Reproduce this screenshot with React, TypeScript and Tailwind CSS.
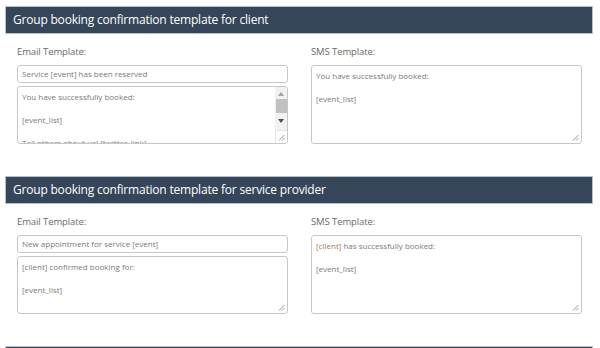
import React from "react";

const font = { fontFamily: '"Open Sans", "Noto Sans", sans-serif' };

function Grip() {
  return (
    <svg className="absolute right-[2px] bottom-[2px]" width="7" height="7" viewBox="0 0 7 7">
      <line x1="6.5" y1="1" x2="1" y2="6.5" stroke="#8a8a8a" strokeWidth="0.9" />
      <line x1="6.5" y1="4" x2="4" y2="6.5" stroke="#8a8a8a" strokeWidth="0.9" />
    </svg>
  );
}

function Box({ lines, h, scroll }: { lines: React.ReactNode[]; h: string; scroll?: boolean }) {
  return (
    <div className={`relative ${h} border border-[#c8c8c8] rounded-[3px] bg-white overflow-hidden`}>
      <div className="px-[4px] pt-[4px] text-[8px] leading-[11.5px] text-[#7a7a7a]">
        {lines.map((l, i) => (
          <div key={i} className="h-[11.5px] whitespace-nowrap">{l}</div>
        ))}
      </div>
      {scroll && (
        <div className="absolute right-0 top-0 bottom-0 w-[12px] flex flex-col">
          <div className="flex-1 bg-[#f1f1f1] flex flex-col items-center pt-[5px]">
            <svg width="6" height="4" viewBox="0 0 6 4"><polygon points="3,0 6,4 0,4" fill="#a3a3a3" /></svg>
            <div className="w-[11px] h-[14px] bg-[#c1c1c1] mt-[3px]" />
            <svg className="mt-[6px]" width="6" height="4" viewBox="0 0 6 4"><polygon points="0,0 6,0 3,4" fill="#505050" /></svg>
          </div>
          <div className="h-[13px] bg-white border-l border-t border-[#e6e6e6]" />
        </div>
      )}
      <Grip />
    </div>
  );
}

function Section({
  title,
  subject,
  email,
  sms,
  scroll,
}: {
  title: string;
  subject: string;
  email: React.ReactNode[];
  sms: React.ReactNode[];
  scroll?: boolean;
}) {
  return (
    <div className="mb-[32px]">
      <div className="h-[28px] bg-[#36465a] border border-[#b9c0c8] flex items-center pl-[7px] text-white text-[12px] tracking-[-0.2px]">
        {title}
      </div>
      <div className="grid grid-cols-[271px_271px] gap-x-[23px] pl-[12px] pt-[11px]">
        <div className="flex flex-col">
          <div className="text-[9.5px] tracking-[-0.1px] leading-[14px] text-[#6a6a6a] mb-[6px]">Email Template:</div>
          <div className="h-[18px] border border-[#c8c8c8] rounded-[3px] px-[4px] flex items-center text-[8px] text-[#7a7a7a] mb-[3px]">
            {subject}
          </div>
          <Box lines={email} h="h-[58px]" scroll={scroll} />
        </div>
        <div className="flex flex-col">
          <div className="text-[9.5px] tracking-[-0.1px] leading-[14px] text-[#6a6a6a] mb-[6px]">SMS Template:</div>
          <Box lines={sms} h="h-[79px]" />
        </div>
      </div>
    </div>
  );
}

export default function App() {
  const client = <span className="text-[#a07a5c]">[client]</span>;
  return (
    <div className="w-[600px] h-[348px] bg-white overflow-hidden pl-[5px] pr-[7px] pt-[6px]" style={font}>
      <Section
        title="Group booking confirmation template for client"
        subject="Service [event] has been reserved"
        email={["You have successfully booked:", "", "[event_list]", "", "Tell others about us! [twitter_link]"]}
        sms={["You have successfully booked:", "", "[event_list]"]}
        scroll
      />
      <Section
        title="Group booking confirmation template for service provider"
        subject="New appointment for service [event]"
        email={["[client] confirmed booking for:", "", "[event_list]"]}
        sms={[<span key="c">{client} has successfully booked:</span>, "", "[event_list]"]}
      />
      <div className="h-[28px] bg-[#36465a] border border-[#b9c0c8]" />
    </div>
  );
}
